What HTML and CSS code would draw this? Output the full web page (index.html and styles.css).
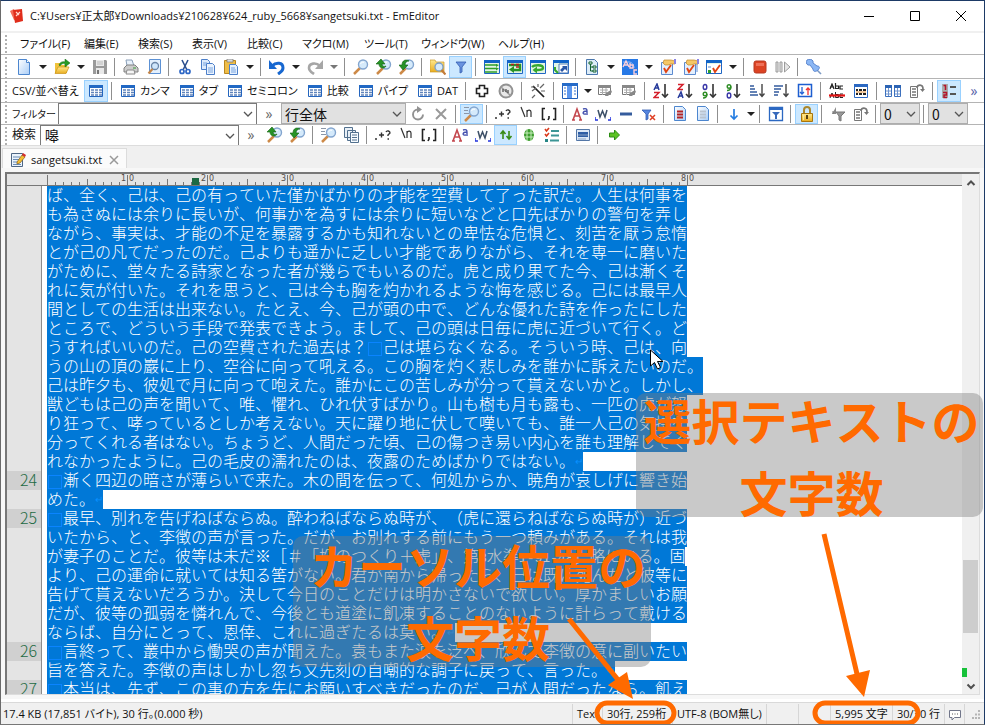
FILE: index.html
```html
<!DOCTYPE html>
<html lang="ja">
<head>
<meta charset="utf-8">
<title>sangetsuki.txt - EmEditor</title>
<link rel="stylesheet" href="styles.css">
</head>
<body>
<svg class="defs" aria-hidden="true">
<defs>
<linearGradient id="gl" x1="0" y1="0" x2="1" y2="1"><stop offset="0" stop-color="#fff"/><stop offset="1" stop-color="#a9cdf7"/></linearGradient>
<linearGradient id="gy" x1="0" y1="0" x2="0" y2="1"><stop offset="0" stop-color="#ffe98e"/><stop offset="1" stop-color="#e9ac1e"/></linearGradient>
<symbol id="new" viewBox="0 0 16 16"><path d="M2.500.500h8l3 3v12h-11z" fill="url(#gl)" stroke="#4c86cf"/><path d="M10.500.500v3h3" fill="#fff" stroke="#4c86cf"/></symbol>
<symbol id="open" viewBox="0 0 16 16"><path d="M1 4h5l1 2h6v8H1z" fill="#f1c33c"/><path d="M1 14.500 4 8h11l-3 6.500z" fill="url(#gy)" stroke="#c99319" stroke-width=".7"/><path d="M5 6c1-3 4-4 6-3V0l5 4-5 4V5C9 4 7 5 6 7z" fill="#259b25" stroke="#126612" stroke-width=".5"/></symbol>
<symbol id="save" viewBox="0 0 16 16"><path d="M1 1h13l1 1v13H1z" fill="#9a9a9a"/><path d="M4 1h8v6H4zM4 9h8v6H4z" fill="#e9e9e9"/><path d="M5 3h6M5 5h6" stroke="#bbb"/><path d="M5 11h2v4H5z" fill="#777"/></symbol>
<symbol id="print" viewBox="0 0 16 16"><path d="m4 7-1-6h6l2 6" fill="#e8f1fb" stroke="#8a9fb8"/><path d="M1 9l3-3h8l3 3v4H1z" fill="#ccc" stroke="#808080"/><path d="M4 11h7l1 4H3z" fill="#f5f5f5" stroke="#8a8a8a"/><path d="M10 9h3" stroke="#3a9b3a"/></symbol>
<symbol id="preview" viewBox="0 0 16 16"><path d="M3.500.500h11v14h-11z" fill="#e4f0fd" stroke="#5c91d4"/><circle cx="9" cy="7" r="3.500" fill="#cfe6fb" stroke="#6b86a8" stroke-width="1.300"/><path d="m6.500 10-4 4.500" stroke="#c48547" stroke-width="2.200"/></symbol>
<symbol id="cut" viewBox="0 0 16 16"><path d="m5 1 5 10M11 1 6 11" stroke="#2b4e8e" stroke-width="1.600"/><g fill="none" stroke="#2f68c6" stroke-width="1.700"><circle cx="5" cy="12.500" r="2"/><circle cx="11" cy="12.500" r="2"/></g></symbol>
<symbol id="copy" viewBox="0 0 16 16"><path d="M1.500.500h6l2 2v8h-8z" fill="#dceafb" stroke="#4c7fc9"/><path d="M6.500 4.500h6l2 2v9h-8z" fill="#eaf3fe" stroke="#4c7fc9"/><path d="M3 4h4M3 6h3M8 9h5M8 11h5M8 13h5" stroke="#79a4df"/></symbol>
<symbol id="paste" viewBox="0 0 16 16"><path d="M1.500 1.500h11v13h-11z" fill="#eebd48" stroke="#b98720"/><path d="M4 0h6v3H4z" fill="#ddd" stroke="#777" stroke-width=".7"/><path d="M6.500 5.500h6l2 2v8h-8z" fill="#e6f1fe" stroke="#4c7fc9"/><path d="M8 9h4M8 11h5M8 13h5" stroke="#79a4df"/></symbol>
<symbol id="undo" viewBox="0 0 16 16"><path d="M3 7c4-4 11-4 11 2 0 3-2 4-5 6" fill="none" stroke="#1767d0" stroke-width="3"/><path d="M0 1v9h8z" fill="#1767d0"/></symbol>
<symbol id="redo" viewBox="0 0 16 16"><path d="M13 7C9 3 2 4 2 9c0 3 2 4 5 6" fill="none" stroke="#a6a6a6" stroke-width="2.600"/><path d="M16 1v9H8z" fill="#a6a6a6"/></symbol>
<symbol id="find" viewBox="0 0 16 16"><path d="m7 9-6 6" stroke="#cd8a48" stroke-width="2.500"/><circle cx="10" cy="5.500" r="4.500" fill="#d5eafb" stroke="#83a5cf" stroke-width="1.400"/><path d="M7.500 5c.5-1.500 2-2.200 3.500-1.700" stroke="#fff" fill="none"/></symbol>
<symbol id="findup" viewBox="0 0 16 16"><use href="#find"/><path d="M0 5 5 0l4 5H6c0 2 2 3 4 2-1 3-7 3-7-2z" fill="#279327" stroke="#12620f" stroke-width=".6"/></symbol>
<symbol id="finddn" viewBox="0 0 16 16"><use href="#find"/><path d="M0 6h3c0-5 4-6 7-4-2 0-4 1-4 4h3l-5 5z" fill="#279327" stroke="#12620f" stroke-width=".6"/></symbol>
<symbol id="findfast" viewBox="0 0 16 16"><use href="#find"/><path d="M0 1.500h5M0 4.500h4M0 7.500h5" stroke="#8b97a8"/></symbol>
<symbol id="findfiles" viewBox="0 0 16 16"><path d="M0 1h5l1 2h8v10H0z" fill="url(#gy)" stroke="#c99a29" stroke-width=".7"/><circle cx="9" cy="8" r="4" fill="#d5eafb" stroke="#7c9fc6" stroke-width="1.300"/><path d="m11.500 11 4 4.500" stroke="#c27b3a" stroke-width="2.200"/></symbol>
<symbol id="filter" viewBox="0 0 16 16"><path d="M3 3h10l-4 5v5l-2 1V8z" fill="#6a93df" stroke="#315bb0" stroke-width=".8"/></symbol>
<symbol id="frame" viewBox="0 0 16 16"><path d="M.500 1.500h15v13H.500z" fill="#e3f5e5" stroke="#1f66c4"/><path d="M0 1h16v3H0z" fill="#1264c8"/></symbol>
<symbol id="wrapno" viewBox="0 0 16 16"><use href="#frame"/><path d="M1 6h12M1 9.500h12M1 13h12" stroke="#2f9e2a" stroke-width="1.500"/><path d="m12 5 3 1-3 2zm0 3.500 3 1-3 2z" fill="#2f9e2a"/></symbol>
<symbol id="wrapchar" viewBox="0 0 16 16"><use href="#frame"/><path d="M2 6h11v5H6" fill="none" stroke="#279327" stroke-width="2.400"/><path d="m7 7v7l-5-3.500z" fill="#279327"/><path d="M4 5.500h3M9 5.500h3M9 8h3" stroke="#b51d1d" stroke-width="1.600"/></symbol>
<symbol id="wrapwin" viewBox="0 0 16 16"><use href="#frame"/><path d="M2 8c2-2 11-3 11 1 0 2-3 2-6 2" fill="none" stroke="#36a82e" stroke-width="2.400"/><path d="m7 7.500v7L2.500 11z" fill="#36a82e"/></symbol>
<symbol id="wrappage" viewBox="0 0 16 16"><use href="#frame"/><path d="M6 5h9v9H6z" fill="#fff" stroke="#547fb9"/><path d="M9 7h5v5l-2-2-3 3-2-2 3-3z" fill="#2b57a6"/><path d="M2 8v3l3 3" fill="none" stroke="#36a82e" stroke-width="2"/></symbol>
<symbol id="tree" viewBox="0 0 16 16"><path d="M2.500.500h8l3 3v12h-11z" fill="#dcecf8" stroke="#4b77ad"/><path d="M5 3h3v2H5zM9 7h3v2H9zM9 11h3v2H9z" fill="#fff" stroke="#126330"/><path d="M6.500 5v7H9M6.500 8H9" stroke="#126330" fill="none"/></symbol>
<symbol id="abc" viewBox="0 0 16 16"><path d="M0 0h16v16H0z" fill="#2779e6"/><path d="M1 3h6c3 0 5 3 5 6" stroke="#8fc0ff" fill="none"/><path d="m1 8 3-6 3 6M2 6h4M8 4v5h3V6H8M15 11h-3v4h3" stroke="#ffd0d8" stroke-width="1.400" fill="none"/></symbol>
<symbol id="check" viewBox="0 0 16 16"><path d="M1.500 3.500h11v12h-11z" fill="#e3effd" stroke="#5c8bd0"/><path d="m4 9 2 4 5-7" fill="none" stroke="#e14312" stroke-width="1.900"/><path d="M4 1h7l4 1v3h-4L8 6H5L3 4z" fill="#f5c766" stroke="#c08627" stroke-width=".7"/><path d="M14 0h2v5h-2z" fill="#8a82e3"/></symbol>
<symbol id="checks" viewBox="0 0 16 16"><path d="M6 4h8v9" fill="none" stroke="#5c8bd0"/><use href="#check"/></symbol>
<symbol id="tasks" viewBox="0 0 16 16"><use href="#frame"/><path d="M1 5h14v9H1z" fill="#fff"/><path d="m7 9 2 4 5-7" fill="none" stroke="#e14312" stroke-width="1.900"/><path d="M2 11h3v3H2z" fill="#2f9e2a"/><path d="M2 7h3v2H2z" fill="#aac3e6"/></symbol>
<symbol id="stop" viewBox="0 0 16 16"><rect x="2" y="2" width="12" height="12" rx="2" fill="#dc4323" stroke="#b63822"/><path d="M4 4h8v3H4z" fill="#ef7058"/></symbol>
<symbol id="step" viewBox="0 0 16 16"><path d="M1 3h2v10H1zM5 3h2v10H5zM9.500 3l5.500 5-5.500 5z" fill="#e5e5e5" stroke="#9b9b9b"/></symbol>
<symbol id="pin" viewBox="0 0 16 16"><path d="m9 9 6 6" stroke="#7d9ac4" stroke-width="1.600"/><path d="M1 1c2-1 5-1 6 1v2l4 3c3 0 3 2 1 4-2 2-5 2-5-1L4 6H2C0 5 0 3 1 1z" fill="#8bb7f5" stroke="#5b86cf"/></symbol>
<symbol id="table" viewBox="0 0 16 16"><path d="M1.500 2.500h13v11h-13z" fill="#fff" stroke="#2465be"/><path d="M1 2h14v3H1z" fill="#2168c4"/><path d="M3 7h3M7 7h3M11 7h3M3 9.500h3M7 9.500h3M11 9.500h3M3 12h3M7 12h3M11 12h3" stroke="#5f83ba" stroke-width="1.300"/></symbol>
<symbol id="plus" viewBox="0 0 16 16"><path d="M5.500 2.500h5v3h3v5h-3v3h-5v-3h-3v-5h3z" fill="#fff" stroke="#222" stroke-width="1.600"/></symbol>
<symbol id="noquote" viewBox="0 0 16 16"><circle cx="8" cy="8" r="6.500" fill="#e9e9e9" stroke="#929292" stroke-width="2"/><path d="m3 4 10 9" stroke="#999" stroke-width="1.500"/><path d="M5 6v3M8 6v3M10 7v3" stroke="#555" stroke-width="1.300"/></symbol>
<symbol id="wand" viewBox="0 0 16 16"><path d="m3 3 11 11" stroke="#222" stroke-width="1.700"/><path d="M10 5l4-4M2 8l4-3M5 12l-3 3M8 1v3M11 8h4M1 4h3" stroke="#666" stroke-width="1.200"/></symbol>
<symbol id="columns" viewBox="0 0 16 16"><path d="M.500.500h15v15H.500z" fill="#fff" stroke="#225fb9"/><path d="M0 0h16v3H0z" fill="#266bc8"/><path d="M5 3h5v12H5z" fill="#5d97ee"/><path d="M2 5h2M2 8h2M2 11h2M12 5h2M12 8h2M12 11h2" stroke="#7ba0db" stroke-width="1.500"/></symbol>
<symbol id="tableg" viewBox="0 0 16 16"><path d="M1.500 2.500h12v9h-12z" fill="#fff" stroke="#777"/><path d="M1 2h13v3H1z" fill="#888"/><path d="M3 7h8M3 9.500h7M5.500 5v7M9 5v6" stroke="#aaa"/><path d="m8 13 1-3 5-3 1 2-4 4z" fill="#888"/></symbol>
<symbol id="arrowdn" viewBox="0 0 16 16"><path d="M12 1v13" stroke="#333" stroke-width="1.600"/><path d="M9 11l3 3 3-3" fill="none" stroke="#333" stroke-width="1.600"/></symbol>
<symbol id="sortaz" viewBox="0 0 16 16"><path d="m1 7 3-6 2 6M2 5h4" fill="none" stroke="#273b9b" stroke-width="1.500"/><path d="M1 9.500h5l-5 5h5" fill="none" stroke="#d4202c" stroke-width="1.500"/><use href="#arrowdn"/></symbol>
<symbol id="sortza" viewBox="0 0 16 16"><path d="M1 1.500h5l-5 5h5" fill="none" stroke="#d4202c" stroke-width="1.500"/><path d="m1 15 3-6 2 6M2 13h4" fill="none" stroke="#273b9b" stroke-width="1.500"/><use href="#arrowdn"/></symbol>
<symbol id="sort09" viewBox="0 0 16 16"><ellipse cx="4" cy="4" rx="1.800" ry="2.500" fill="none" stroke="#3a38a8" stroke-width="1.400"/><circle cx="4" cy="11" r="1.800" fill="none" stroke="#2d8d24" stroke-width="1.400"/><path d="M6 11c0 2-1 4-4 4" fill="none" stroke="#2d8d24" stroke-width="1.400"/><use href="#arrowdn"/></symbol>
<symbol id="sort90" viewBox="0 0 16 16"><circle cx="4" cy="3.500" r="1.800" fill="none" stroke="#2d8d24" stroke-width="1.400"/><path d="M6 3.500c0 2-1 4-4 4" fill="none" stroke="#2d8d24" stroke-width="1.400"/><ellipse cx="4" cy="12.500" rx="1.800" ry="2.500" fill="none" stroke="#3a38a8" stroke-width="1.400"/><use href="#arrowdn"/></symbol>
<symbol id="lenup" viewBox="0 0 16 16"><path d="M1 3h4M1 6h5M1 9h7M1 12h8" stroke="#335b9d" stroke-width="1.600"/><path d="M13 1v12M10.500 10.500l2.500 3 2.500-3" fill="none" stroke="#444" stroke-width="1.400"/></symbol>
<symbol id="lendn" viewBox="0 0 16 16"><path d="M1 3h9M1 6h7M1 9h5M1 12h4" stroke="#335b9d" stroke-width="1.600"/><path d="M13 1v12M10.500 10.500l2.500 3 2.500-3" fill="none" stroke="#444" stroke-width="1.400"/></symbol>
<symbol id="updown" viewBox="0 0 16 16"><path d="M1.500 1.500h13v12h-13z" fill="#fff" stroke="#1d5ed0" stroke-width="1.500"/><path d="M5 4v7M3 9l2 2 2-2" fill="none" stroke="#2464d6" stroke-width="1.300"/><path d="M11 12V5M9 7l2-2 2 2" fill="none" stroke="#e33" stroke-width="1.300"/></symbol>
<symbol id="dup" viewBox="0 0 16 16"><path d="m1 6 2-5 2 5M1 4h4M6.500 0v5.500h3V3h-3M14 3h-3v3h3" fill="none" stroke="#222" stroke-width="1.200"/><path d="m1 15 2-5 2 5M6.500 9v5.500h3v-3h-3M14 11h-3v3.500h3" fill="none" stroke="#222"/><path d="M0 12.500h16" stroke="#e31414" stroke-width="2.200"/></symbol>
<symbol id="unique" viewBox="0 0 16 16"><path d="M1.500 1.500h13v13h-13z" fill="#fff" stroke="#2b68c2"/><path d="M1 1h14v3H1z" fill="#2b68c2"/><path d="M3 7h2M6 7h3M10 7h3M3 11h2M6 11h3M10 11h3" stroke="#222" stroke-width="2"/><path d="M3 9h10" stroke="#e18b31"/></symbol>
<symbol id="tables" viewBox="0 0 16 16"><path d="M.500 2.500h6v11h-6zM9.500 2.500h6v11h-6z" fill="#fff" stroke="#3c70bd"/><path d="M0 2h7v3H0zM9 2h7v3H9z" fill="#2c64b4"/><path d="M1 8h5M1 11h5M3.500 5v8M10 8h5M10 11h5M12.500 5v8" stroke="#6d94d0"/></symbol>
<symbol id="rotate" viewBox="0 0 16 16"><path d="M1.500 3.500h7v11h-7z" fill="#fff" stroke="#777"/><path d="M3 6h4M3 9h4M3 12h4" stroke="#777" stroke-width="1.400"/><path d="M8 5c0-4 6-4 6 1" fill="none" stroke="#777" stroke-width="1.700"/><path d="M11 6h5l-2.500 3z" fill="#777"/></symbol>
<symbol id="numbers" viewBox="0 0 16 16"><path d="M1 1h6v14H1z" fill="#aaa"/><path d="M2.500 2.500h2V7M2 9.500h3.500V12H3v2.500h3" fill="none" stroke="#b3122b" stroke-width="1.500"/><path d="M9 4h6M9 11h6" stroke="#555" stroke-width="1.800"/></symbol>
<symbol id="refresh" viewBox="0 0 16 16"><path d="M8 3.500a5 5 0 1 0 5 5" fill="none" stroke="#929292" stroke-width="1.900"/><path d="M7 0l5 3.500L7 7z" fill="#929292"/></symbol>
<symbol id="cross" viewBox="0 0 16 16"><path d="m3 3 10 10M13 3 3 13" stroke="#999" stroke-width="2"/></symbol>
<symbol id="regex" viewBox="0 0 16 16"><path d="M0 12h2M4 8h5M6.500 5.500v5M11 5c1-2 4-1 4 1l-2 2v1M12.500 12h1.500" fill="none" stroke="#333" stroke-width="1.400"/></symbol>
<symbol id="escape" viewBox="0 0 16 16"><path d="m3 1 4 10M9 11V4M9 6c1-3 4-2 4 0v5" fill="none" stroke="#333" stroke-width="1.200"/></symbol>
<symbol id="bracket" viewBox="0 0 16 16"><path d="M4 2.500H1.500v11H4M12 2.500h2.500v11H12M8 10v2l-1 2" fill="none" stroke="#222" stroke-width="1.600"/></symbol>
<symbol id="case" viewBox="0 0 16 16"><path d="m1 14 4-11 4 11M3 10h5M0 14h3M7 14h3" fill="none" stroke="#c4484f" stroke-width="1.600"/><path d="M11 3c3-1 4 0 4 2v4M15 5c-5 0-5 4-1 3" fill="none" stroke="#4450ad" stroke-width="1.400"/></symbol>
<symbol id="word" viewBox="0 0 16 16"><path d="m3 4 2 7 2.500-6L10 11l2-7" fill="none" stroke="#3c4f66" stroke-width="1.500"/><path d="M0 11v3h3M13 14h3v-3" fill="none" stroke="#23d" stroke-width="1.500"/></symbol>
<symbol id="minus" viewBox="0 0 16 16"><path d="M2 6.500h12v3H2z" fill="#355c9d"/></symbol>
<symbol id="nofilter" viewBox="0 0 16 16"><path d="M1 4h9L7 8v5l-2 1V8z" fill="#5585df" stroke="#315bb0" stroke-width=".8"/><path d="m9 9 5 5m0-5-5 5" stroke="#df3e24" stroke-width="1.500"/></symbol>
<symbol id="docred" viewBox="0 0 16 16"><path d="M2.500.500h8l3 3v11h-11z" fill="url(#gl)" stroke="#4c86cf"/><path d="M5 5.500h6M5 8.500h6M5 11.500h6" stroke="#b42424" stroke-width="2"/></symbol>
<symbol id="docgray" viewBox="0 0 16 16"><path d="M2.500.500h8l3 3v11h-11z" fill="url(#gl)" stroke="#4c86cf"/><path d="M5 5.500h6M5 8.500h6M5 11.500h6" stroke="#b9c3cf" stroke-width="2"/></symbol>
<symbol id="down" viewBox="0 0 16 16"><path d="M8 3v10M4.500 9.500 8 13l3.500-3.500" fill="none" stroke="#257de1" stroke-width="1.700"/></symbol>
<symbol id="filterwin" viewBox="0 0 16 16"><path d="M1.500 1.500h13v13h-13z" fill="#fff" stroke="#2b68c2" stroke-width="1.300"/><path d="M1 1h14v3H1z" fill="#2b68c2"/><path d="M4 6h8l-3 3v4H7V9z" fill="#386abc"/></symbol>
<symbol id="lock" viewBox="0 0 16 16"><path d="M5 8V4c0-4 6-4 6 0v4" fill="none" stroke="#a9872d" stroke-width="2"/><path d="M2.500 7.500h11v8h-11z" fill="url(#gy)" stroke="#a8750d"/><path d="M4 9h1v5H4z" fill="#ffe99a"/><path d="M7 9h2v4H7z" fill="#573f10"/></symbol>
<symbol id="filterup" viewBox="0 0 16 16"><path d="m2 8 4-7v7z" fill="#888"/><path d="M6 6h9l-4 4v5l-2-1v-4zM3 8V5" fill="#999" stroke="#777"/></symbol>
<symbol id="copies" viewBox="0 0 16 16"><path d="M.500.500h8v10h-8zM3.500 3.500h8v10h-8z" fill="#e9f0f7" stroke="#52708e"/><path d="M6.500 5.500h8v10h-8z" fill="#f6fbff" stroke="#52708e"/><path d="M8 8h5M8 10.500h5M8 13h5" stroke="#52708e"/></symbol>
<symbol id="wraparound" viewBox="0 0 16 16"><path d="M5 12V4M2.500 7 5 4l2.500 3M11 4v8M8.500 9l2.500 3 2.500-3" fill="none" stroke="#398b16" stroke-width="1.600"/></symbol>
<symbol id="globe" viewBox="0 0 16 16"><ellipse cx="8" cy="8" rx="5" ry="6" fill="#3c9d2d"/><path d="M3 6h10M3 10h10M6 2v12M10 2v12" stroke="#c7edbd"/></symbol>
<symbol id="options" viewBox="0 0 16 16"><path d="m1 2 1.500 2L5 1M1 7l1.500 2L5 6" fill="none" stroke="#d93a1b" stroke-width="1.600"/><path d="M1 12h3v3H1z" fill="#268686"/><path d="M7 4h8M7 8.500h8M6 13.500h9" stroke="#3c9696" stroke-width="1.900"/></symbol>
<symbol id="bar" viewBox="0 0 16 16"><path d="M1.500 2.500h13v11h-13z" fill="#dce8f6" stroke="#5376a6"/><path d="M3 5h10v5H3z" fill="#2d5da5"/><path d="M3 8h10M3 12h8" stroke="#8ba4c5"/></symbol>
<symbol id="go" viewBox="0 0 16 16"><path d="M3.500 6h5V3l5 5-5 5v-3h-5z" fill="#5cc323" stroke="#2c8d14"/></symbol>
<symbol id="chev" viewBox="0 0 16 16"><path d="m4 6 4 4 4-4" fill="none" stroke="#555" stroke-width="1.300"/></symbol>
</defs>
</svg>

<main class="window">
  <header class="titlebar">
    <svg class="logo" viewBox="0 0 16 16" aria-hidden="true"><path d="m1 3 4-2 3 12-3-1z" fill="#f26a56"/><path d="m4 2 9-1 1 12-8 2z" fill="#e02d1b"/><path d="m7 4 3 3M7 8l4-4" stroke="#ffd9d0" stroke-width="1.200"/></svg>
    <h1>C:¥Users¥正太郎¥Downloads¥210628¥624_ruby_5668¥sangetsuki.txt - EmEditor</h1>
    <button class="win" aria-label="最小化"><svg viewBox="0 0 12 12"><path d="M1 6.500h10" stroke="#000"/></svg></button>
    <button class="win" aria-label="最大化"><svg viewBox="0 0 12 12"><path d="M1.500 1.500h9v9h-9z" fill="none" stroke="#000"/></svg></button>
    <button class="win" aria-label="閉じる"><svg viewBox="0 0 12 12"><path d="m1 1 10 10M11 1 1 11" stroke="#000"/></svg></button>
  </header>

  <nav class="bar menu">
    <button>ファイル(F)</button><button>編集(E)</button><button>検索(S)</button><button>表示(V)</button><button>比較(C)</button><button>マクロ(M)</button><button>ツール(T)</button><button>ウィンドウ(W)</button><button>ヘルプ(H)</button>
  </nav>

  <div class="bar main-tools">
    <button class="tb" aria-label="新規"><svg><use href="#new"/></svg></button><button class="dd" aria-label="新規の一覧"></button>
    <button class="tb" aria-label="開く"><svg><use href="#open"/></svg></button><button class="dd" aria-label="最近のファイル"></button>
    <button class="tb" aria-label="保存"><svg><use href="#save"/></svg></button><i class="sep"></i>
    <button class="tb" aria-label="印刷"><svg><use href="#print"/></svg></button>
    <button class="tb" aria-label="印刷プレビュー"><svg><use href="#preview"/></svg></button><i class="sep"></i>
    <button class="tb" aria-label="切り取り"><svg><use href="#cut"/></svg></button>
    <button class="tb" aria-label="コピー"><svg><use href="#copy"/></svg></button>
    <button class="tb" aria-label="貼り付け"><svg><use href="#paste"/></svg></button><button class="dd" aria-label="履歴"></button><i class="sep"></i>
    <button class="tb" aria-label="元に戻す"><svg><use href="#undo"/></svg></button><button class="dd" aria-label="元に戻す一覧"></button>
    <button class="tb" aria-label="やり直し"><svg><use href="#redo"/></svg></button><button class="dd off" aria-label="やり直し一覧"></button><i class="sep"></i>
    <button class="tb" aria-label="検索"><svg><use href="#find"/></svg></button>
    <button class="tb" aria-label="前を検索"><svg><use href="#findup"/></svg></button>
    <button class="tb" aria-label="次を検索"><svg><use href="#finddn"/></svg></button><i class="sep"></i>
    <button class="tb" aria-label="ファイルから検索"><svg><use href="#findfiles"/></svg></button>
    <button class="tb on" aria-label="フィルター バー"><svg><use href="#filter"/></svg></button><i class="sep"></i>
    <button class="tb" aria-label="折り返さない"><svg><use href="#wrapno"/></svg></button>
    <button class="tb on" aria-label="指定文字数で折り返す"><svg><use href="#wrapchar"/></svg></button>
    <button class="tb" aria-label="ウィンドウの右端で折り返す"><svg><use href="#wrapwin"/></svg></button>
    <button class="tb" aria-label="ページに合わせて折り返す"><svg><use href="#wrappage"/></svg></button><i class="sep"></i>
    <button class="tb" aria-label="アウトライン"><svg><use href="#tree"/></svg></button><button class="dd" aria-label="プラグイン"></button>
    <button class="tb" aria-label="変換"><svg><use href="#abc"/></svg></button><button class="dd" aria-label="変換一覧"></button>
    <button class="tb" aria-label="現在の設定"><svg><use href="#check"/></svg></button>
    <button class="tb" aria-label="すべての設定"><svg><use href="#checks"/></svg></button>
    <button class="tb" aria-label="カスタマイズ"><svg><use href="#tasks"/></svg></button><button class="dd" aria-label="カスタマイズ一覧"></button><i class="sep"></i>
    <button class="tb" aria-label="記録"><svg><use href="#stop"/></svg></button>
    <button class="tb" aria-label="実行"><svg><use href="#step"/></svg></button><i class="sep"></i>
    <button class="tb" aria-label="常に手前"><svg><use href="#pin"/></svg></button>
  </div>

  <div class="bar csv-tools">
    <span class="lead wide">CSV/並べ替え</span>
    <button class="tb on" aria-label="標準モード"><svg><use href="#table"/></svg></button><i class="sep"></i>
    <div class="formats">
      <button><svg><use href="#table"/></svg>カンマ</button>
      <button><svg><use href="#table"/></svg>タブ</button>
      <button><svg><use href="#table"/></svg>セミコロン</button>
      <button><svg><use href="#table"/></svg>比較</button>
      <button><svg><use href="#table"/></svg>パイプ</button>
      <button><svg><use href="#table"/></svg>DAT</button>
    </div><i class="sep"></i>
    <button class="tb" aria-label="追加"><svg><use href="#plus"/></svg></button>
    <button class="tb" aria-label="引用符なし"><svg><use href="#noquote"/></svg></button><i class="sep"></i>
    <button class="tb" aria-label="区切り変換"><svg><use href="#wand"/></svg></button><i class="sep"></i>
    <button class="tb" aria-label="列の選択"><svg><use href="#columns"/></svg></button><button class="dd slim" aria-label="列の一覧"></button>
    <button class="tb" aria-label="列の編集"><svg><use href="#tableg"/></svg></button>
    <button class="tb" aria-label="列の抽出"><svg><use href="#tableg"/></svg></button><i class="sep"></i>
    <button class="tb" aria-label="昇順"><svg><use href="#sortaz"/></svg></button>
    <button class="tb" aria-label="降順"><svg><use href="#sortza"/></svg></button>
    <button class="tb" aria-label="数値昇順"><svg><use href="#sort09"/></svg></button>
    <button class="tb" aria-label="数値降順"><svg><use href="#sort90"/></svg></button>
    <button class="tb" aria-label="短い順"><svg><use href="#lenup"/></svg></button>
    <button class="tb" aria-label="長い順"><svg><use href="#lendn"/></svg></button>
    <button class="tb" aria-label="並べ替え"><svg><use href="#updown"/></svg></button><i class="sep"></i>
    <button class="tb" aria-label="重複行の削除"><svg><use href="#dup"/></svg></button>
    <button class="tb" aria-label="重複行"><svg><use href="#unique"/></svg></button><i class="sep"></i>
    <button class="tb" aria-label="結合"><svg><use href="#tables"/></svg></button>
    <button class="tb" aria-label="転置"><svg><use href="#rotate"/></svg></button><i class="sep"></i>
    <button class="tb on" aria-label="行番号"><svg><use href="#numbers"/></svg></button>
    <button class="more">»</button>
  </div>

  <div class="bar filter-tools">
    <label class="lead filter-label" for="filter-text">フィルター</label>
    <div class="combo"><input id="filter-text" type="text"><button aria-label="フィルター履歴"><svg><use href="#chev"/></svg></button></div>
    <button class="more">»</button>
    <div class="pick scope"><select aria-label="対象"><option>行全体</option></select><svg><use href="#chev"/></svg></div>
    <button class="tb" aria-label="更新"><svg><use href="#refresh"/></svg></button>
    <button class="tb" aria-label="中止"><svg><use href="#cross"/></svg></button><i class="sep"></i>
    <button class="tb on" aria-label="インクリメンタル検索"><svg><use href="#findfast"/></svg></button><i class="sep"></i>
    <button class="tb" aria-label="正規表現"><svg><use href="#regex"/></svg></button>
    <button class="tb" aria-label="エスケープ シーケンス"><svg><use href="#escape"/></svg></button>
    <button class="tb" aria-label="数値範囲"><svg><use href="#bracket"/></svg></button><i class="sep"></i>
    <button class="tb" aria-label="大文字小文字"><svg><use href="#case"/></svg></button>
    <button class="tb" aria-label="単語"><svg><use href="#word"/></svg></button>
    <button class="tb" aria-label="除外"><svg><use href="#minus"/></svg></button>
    <button class="tb" aria-label="フィルター解除"><svg><use href="#nofilter"/></svg></button><i class="sep"></i>
    <button class="tb" aria-label="ブックマーク行"><svg><use href="#docred"/></svg></button>
    <button class="tb" aria-label="非ブックマーク行"><svg><use href="#docgray"/></svg></button><i class="sep"></i>
    <button class="tb" aria-label="次へ"><svg><use href="#down"/></svg></button><button class="dd slim" aria-label="表示行数"></button><i class="sep"></i>
    <button class="tb" aria-label="高度なフィルター"><svg><use href="#filterwin"/></svg></button><i class="sep"></i>
    <button class="tb on" aria-label="ロック"><svg><use href="#lock"/></svg></button><i class="sep"></i>
    <button class="tb" aria-label="フィルターを戻す"><svg><use href="#filterup"/></svg></button>
    <button class="tb" aria-label="抽出"><svg><use href="#rotate"/></svg></button><i class="sep"></i>
    <div class="pick count"><select aria-label="前の行数"><option>0</option></select><svg><use href="#chev"/></svg></div><i class="sep"></i>
    <div class="pick count"><select aria-label="後の行数"><option>0</option></select><svg><use href="#chev"/></svg></div>
  </div>

  <div class="bar find-tools">
    <label class="lead find-label" for="find-text">検索</label>
    <div class="combo"><input id="find-text" type="text" value="嗥"><button aria-label="検索履歴"><svg><use href="#chev"/></svg></button></div>
    <button class="more">»</button>
    <button class="tb" aria-label="前を検索"><svg><use href="#findup"/></svg></button>
    <button class="tb" aria-label="次を検索"><svg><use href="#finddn"/></svg></button><i class="sep"></i>
    <button class="tb" aria-label="インクリメンタル検索"><svg><use href="#findfast"/></svg></button>
    <button class="tb" aria-label="文書グループ"><svg><use href="#copies"/></svg></button><i class="sep"></i>
    <button class="tb" aria-label="正規表現"><svg><use href="#regex"/></svg></button>
    <button class="tb" aria-label="エスケープ シーケンス"><svg><use href="#escape"/></svg></button>
    <button class="tb" aria-label="数値範囲"><svg><use href="#bracket"/></svg></button><i class="sep"></i>
    <button class="tb" aria-label="大文字小文字"><svg><use href="#case"/></svg></button>
    <button class="tb" aria-label="単語"><svg><use href="#word"/></svg></button>
    <button class="tb on" aria-label="文末まで検索したら文頭に移動"><svg><use href="#wraparound"/></svg></button>
    <button class="tb" aria-label="すべて"><svg><use href="#globe"/></svg></button>
    <button class="tb" aria-label="オプション"><svg><use href="#options"/></svg></button><i class="sep"></i>
    <button class="tb" aria-label="検索バー"><svg><use href="#bar"/></svg></button><i class="sep"></i>
    <button class="tb" aria-label="移動"><svg><use href="#go"/></svg></button>
  </div>

  <div class="tabs">
    <div class="tab">
      <svg class="tab-icon" viewBox="0 0 16 16" aria-hidden="true"><path d="M1.500 1.500h11v13h-11z" fill="#eaf3fc" stroke="#4e6785"/><path d="M3 5h7M3 7.500h6M3 10h5M3 12.500h8" stroke="#698bb5"/><path d="m7 10 5-7 3 2-5 6-3 1z" fill="#f5bd30" stroke="#82601f" stroke-width=".7"/><path d="m12 3 1-2 3 2-1 2z" fill="#d62b2b"/></svg>
      <span>sangetsuki.txt</span>
      <button aria-label="タブを閉じる"><svg viewBox="0 0 10 10"><path d="m1 1 8 8M9 1 1 9" stroke="#999" stroke-width="1.500"/></svg></button>
    </div>
  </div>

  <section class="editor">
    <div class="page">
      <div class="ruler">
        <svg class="ticks" aria-hidden="true"><defs><pattern id="tick" width="80" height="10" patternUnits="userSpaceOnUse"><path d="M.500 0v10M8.500 7v3M16.500 7v3M24.500 7v3M32.500 7v3M40.500 4v6M48.500 7v3M56.500 7v3M64.500 7v3M72.500 7v3" stroke="#777"/></pattern></defs><rect width="641" height="10" fill="url(#tick)"/><rect x="145" y="3" width="7" height="7" fill="#1c6a43"/></svg>
        <span>1<b>0</b></span><span>2<b>0</b></span><span>3<b>0</b></span><span>4<b>0</b></span><span>5<b>0</b></span><span>6<b>0</b></span><span>7<b>0</b></span><span>8<b>0</b></span>
      </div>
      <div class="text">
        <div class="row"><span></span><p>ば、全く、己は、己の有っていた僅かばかりの才能を空費して了った訳だ。人生は何事を</p></div>
        <div class="row"><span></span><p>も為さぬには余りに長いが、何事かを為すには余りに短いなどと口先ばかりの警句を弄し</p></div>
        <div class="row"><span></span><p>ながら、事実は、才能の不足を暴露するかも知れないとの卑怯な危惧と、刻苦を厭う怠惰</p></div>
        <div class="row"><span></span><p>とが己の凡てだったのだ。己よりも遥かに乏しい才能でありながら、それを専一に磨いた</p></div>
        <div class="row"><span></span><p>がために、堂々たる詩家となった者が幾らでもいるのだ。虎と成り果てた今、己は漸くそ</p></div>
        <div class="row"><span></span><p>れに気が付いた。それを思うと、己は今も胸を灼かれるような悔を感じる。己には最早人</p></div>
        <div class="row"><span></span><p>間としての生活は出来ない。たとえ、今、己が頭の中で、どんな優れた詩を作ったにした</p></div>
        <div class="row"><span></span><p>ところで、どういう手段で発表できよう。まして、己の頭は日毎に虎に近づいて行く。ど</p></div>
        <div class="row"><span></span><p>うすればいいのだ。己の空費された過去は？<i class="space"></i>己は堪らなくなる。そういう時、己は、向</p></div>
        <div class="row"><span></span><p>うの山の頂の巖に上り、空谷に向って吼える。この胸を灼く悲しみを誰かに訴えたいのだ。</p></div>
        <div class="row"><span></span><p>己は昨夕も、彼処で月に向って咆えた。誰かにこの苦しみが分って貰えないかと。しかし、</p></div>
        <div class="row"><span></span><p>獣どもは己の声を聞いて、唯、懼れ、ひれ伏すばかり。山も樹も月も露も、一匹の虎が怒</p></div>
        <div class="row"><span></span><p>り狂って、哮っているとしか考えない。天に躍り地に伏して嘆いても、誰一人己の気持を</p></div>
        <div class="row"><span></span><p>分ってくれる者はない。ちょうど、人間だった頃、己の傷つき易い内心を誰も理解してく</p></div>
        <div class="row"><span></span><p>れなかったように。己の毛皮の濡れたのは、夜露のためばかりではない。<i class="cr">↵</i></p></div>
        <div class="row num"><span>24</span><p><i class="space"></i>漸く四辺の暗さが薄らいで来た。木の間を伝って、何処からか、暁角が哀しげに響き始</p></div>
        <div class="row"><span></span><p>めた。<i class="cr">↵</i></p></div>
        <div class="row num"><span>25</span><p><i class="space"></i>最早、別れを告げねばならぬ。酔わねばならぬ時が、（虎に還らねばならぬ時が）近づ</p></div>
        <div class="row"><span></span><p>いたから、と、李徴の声が言った。だが、お別れする前にもう一つ頼みがある。それは我</p></div>
        <div class="row"><span></span><p>が妻子のことだ。彼等は未だ※［＃「埒のつくり＋虎」、第<span class="half">3</span>水準<span class="half">1-91-48</span>］略にいる。固</p></div>
        <div class="row"><span></span><p>より、己の運命に就いては知る筈がない。君が南から帰ったら、己は既に死んだと彼等に</p></div>
        <div class="row"><span></span><p>告げて貰えないだろうか。決して今日のことだけは明かさないで欲しい。厚かましいお願</p></div>
        <div class="row"><span></span><p>だが、彼等の孤弱を憐れんで、今後とも道塗に飢凍することのないように計らって戴ける</p></div>
        <div class="row"><span></span><p>ならば、自分にとって、恩倖、これに過ぎたるは莫い。<i class="cr">↵</i></p></div>
        <div class="row num"><span>26</span><p><i class="space"></i>言終って、叢中から慟哭の声が聞えた。袁もまた涙を泛べ、欣んで李徴の意に副いたい</p></div>
        <div class="row"><span></span><p>旨を答えた。李徴の声はしかし忽ち又先刻の自嘲的な調子に戻って、言った。<i class="cr">↵</i></p></div>
        <div class="row num"><span>27</span><p><i class="space"></i>本当は、先ず、この事の方を先にお願いすべきだったのだ、己が人間だったなら。飢え</p></div>
      </div>
    </div>
    <div class="scroll">
      <button aria-label="上へ"><svg viewBox="0 0 16 16"><path d="m4.500 10 3.500-3.500 3.500 3.500" fill="none" stroke="#505050" stroke-width="2"/></svg></button>
      <div class="track"><i class="thumb"></i><i class="mark"></i></div>
      <button aria-label="下へ"><svg viewBox="0 0 16 16"><path d="M4.500 6.500 8 10l3.500-3.500" fill="none" stroke="#505050" stroke-width="2"/></svg></button>
    </div>
  </section>

  <footer class="status">
    <span>17.4 KB (17,851 バイト), 30 行。(0.000 秒)</span>
    <span>Text</span>
    <span>30行, 259桁</span>
    <span>UTF-8 (BOM無し)</span>
    <span></span><span></span>
    <span>5,995 文字</span>
    <span>30/30 行</span>
    <span><svg class="bubble" viewBox="0 0 12 12" aria-hidden="true"><path d="M.500 1.500h11v7h-6L3 11V8.500H.500z" fill="#fff" stroke="#71768a"/><path d="M3 5h1M5.500 5h1M8 5h1" stroke="#555"/></svg></span>
    <span><svg class="grip" viewBox="0 0 12 12" aria-hidden="true"><path d="M9 2h2M6 5.500h2M9 5.500h2M3 9h2M6 9h2M9 9h2" stroke="#b5b5b5" stroke-width="2"/></svg></span>
  </footer>

  <div class="callout selected-count">選択テキストの<br>文字数</div>
  <div class="callout cursor-count">カーソル位置の<br>文字数</div>
  <svg class="marks" aria-hidden="true">
    <g fill="none" stroke="#ff6a00" stroke-width="5"><path d="m569 619 50 62M824 534l33 140"/><rect x="597" y="703" width="77" height="20" rx="10"/><rect x="815" y="703" width="103" height="20" rx="10"/></g>
    <path d="m633 699-25-14 19-13zM864 697l-18-21 24-6z" fill="#ff6a00"/>
    <path d="M650.500 350v16l4-3.500 3 6.500 3-1.500-3-6h5.500z" fill="#fff" stroke="#000"/>
  </svg>
</main>
</body>
</html>
```
FILE: styles.css
```css
* { box-sizing: border-box; }

body {
  margin: 0;
  font: 11px/16px "Open Sans", "Noto Sans CJK JP", sans-serif;
  font-feature-settings: "palt";
  color: #111;
}

button, input, select {
  font: inherit;
  font-feature-settings: inherit;
  color: inherit;
  margin: 0;
  padding: 0;
  border: 0;
  background: none;
}

button { display: flex; align-items: center; justify-content: center; flex: none; }

.defs { position: absolute; width: 0; height: 0; }

.window {
  position: relative;
  display: flex;
  flex-direction: column;
  height: 100vh;
  overflow: hidden;
  background: #fff;
  border: 1px solid #1d3a66;
  border-left-color: #6a6a6a;
  border-bottom-color: #777;
}

.titlebar {
  display: flex;
  flex: none;
  align-items: center;
  height: 32px;
  padding-left: 8px;
  border-bottom: 2px solid #f0f0f0;
}
.logo { width: 16px; height: 16px; margin-right: 5px; }
.titlebar h1 { flex: 1; margin: 0; font-size: 11px; line-height: 16px; font-weight: 400; white-space: nowrap; }
.win { width: 46px; height: 30px; }
.win svg { width: 12px; height: 12px; }

.bar {
  display: flex;
  flex: none;
  align-items: center;
  height: 24px;
  padding-left: 11px;
  border-bottom: 1px solid #b4b4b4;
  background: radial-gradient(circle, #b0b0b0 1px, transparent 1px) 3px 1px / 4px 4px repeat-y #fff;
}
.bar.menu {
  display: grid;
  grid-template-columns: 64px 54px 54px 55px 55px 62px 57px 77px 60px;
  height: 22px;
  padding-left: 19px;
}
.menu button { justify-content: flex-start; white-space: nowrap; }
.bar.filter-tools { height: 22px; }
.bar.find-tools { height: 21px; border-bottom-color: #ddd; }

.tb { width: 23px; height: 22px; }
.tb svg { width: 16px; height: 16px; }
.tb.on { background: #cce8ff; border: 1px solid #99d1ff; }
.filter-tools .tb, .find-tools .tb { height: 20px; }
.csv-tools .tb { width: 24px; }

.sep { flex: none; width: 8px; height: 18px; background: linear-gradient(#8f8f8f, #8f8f8f) 3px 0 / 1px 100% no-repeat; }

.dd { width: 15px; height: 20px; }
.dd::before { content: ""; border: 4px solid transparent; border-top: 4px solid #222; border-bottom: 0; }
.dd.off::before { border-top-color: #777; }
.dd.slim { width: 11px; }

.lead { flex: none; white-space: nowrap; }
.lead.wide { width: 72px; }
.filter-label { width: 46px; font-size: 10px; }
.find-label { width: 28px; font-size: 12px; }

.formats { display: flex; flex: 0 0 346px; justify-content: space-between; padding: 0 4px; }
.formats button { gap: 4px; }
.formats svg { width: 16px; height: 16px; }

.more { width: 24px; font-size: 14px; color: #666; }
.csv-tools .more { margin-left: auto; width: 20px; color: #5560a8; }

.combo { display: flex; flex: 0 0 199px; height: 100%; border: 1px solid #7a7a7a; border-bottom: 0; background: #fff; }
.combo input { flex: 1; min-width: 0; padding-left: 4px; font-size: 14px; line-height: 18px; outline: 0; }
.combo button, .pick svg { width: 16px; }
.combo svg { width: 16px; height: 16px; }

.pick { display: flex; flex: none; align-items: center; height: 100%; border: 1px solid #adadad; background: #e1e1e1; }
.pick select { flex: 1; min-width: 0; appearance: none; padding-left: 3px; font: 14px/18px "Noto Sans CJK JP", sans-serif; }
.pick svg { height: 16px; }
.scope { width: 125px; }
.count { width: 40px; }

.tabs { flex: none; height: 26px; padding: 2px 0 0 1px; background: #f0f0f0; }
.tab {
  display: flex;
  align-items: center;
  width: 125px;
  height: 24px;
  padding: 0 7px 2px;
  background: #fbfbfb;
  border: 1px solid #dcdcdc;
  border-bottom: 0;
}
.tab-icon { width: 16px; height: 16px; margin-right: 5px; }
.tab span { flex: 1; }
.tab button svg { width: 10px; height: 10px; }

.editor {
  display: flex;
  flex: 1;
  min-height: 0;
  margin: 0 4px 7px;
  border: 1px solid #ddd;
  border-top: 2px solid #777;
  border-left: 2px solid #777;
  box-shadow: 0 0 0 4px #f7f7f7;
}
.page { flex: 1; min-width: 0; display: flex; flex-direction: column; overflow: hidden; }
.ruler {
  position: relative;
  display: flex;
  flex: none;
  height: 12px;
  padding-left: 95px;
  background: #e4e4e4;
  border-bottom: 1px solid #777;
  font: 8px/10px "DejaVu Sans", sans-serif;
  color: #554e49;
}
.ruler span { position: relative; width: 80px; padding-left: 19px; }
.ruler b { font-weight: 400; margin-left: 3px; }
.ticks { position: absolute; left: 40px; bottom: 0; width: 641px; height: 10px; }

.text {
  flex: 1;
  min-height: 0;
  overflow: hidden;
  background: linear-gradient(90deg, #e4e4e4 34px, #8c8c8c 34px 35px, #fff 35px);
}
.row {
  display: grid;
  grid-template-columns: 40px max-content;
  height: 19px;
  font: 300 16px/17px "Noto Sans CJK JP", sans-serif;
  font-feature-settings: normal;
  font-kerning: none;
  text-spacing-trim: space-all;
  white-space: pre;
}
.row > span { width: 34px; height: 19px; padding-right: 4px; text-align: right; color: #1c6a43; }
.num > span { background: #d0d0d0; }
.row p { margin: 0; height: 19px; color: #fff; background: #0078d7; }
.half { font: 13px/16px "Liberation Mono", monospace; }
.space { display: inline-block; width: 14px; height: 14px; margin: 0 1px; vertical-align: -3px; border: 1px solid #0a84ff; }
.cr { display: inline-block; width: 8px; overflow: hidden; height: 17px; vertical-align: top; font-size: 10px; font-style: normal; color: #0a90ff; }

.scroll { display: flex; flex: none; flex-direction: column; width: 17px; background: #f0f0f0; }
.scroll button { width: 17px; height: 17px; }
.scroll button svg { width: 16px; height: 16px; }
.track { flex: 1; position: relative; }
.thumb { position: absolute; left: 1px; right: 1px; top: 76%; height: 15%; background: #cdcdcd; }
.mark { position: absolute; left: 0; bottom: 0; width: 5px; height: 9px; background: #17c13a; }

.status {
  display: grid;
  flex: none;
  grid-template-columns: 1fr 30px 70px 94px 32px 32px 62px 52px 20px 20px;
  align-items: center;
  height: 22px;
  background: #f0f0f0;
  border-top: 1px solid #d9d9d9;
}
.status span { height: 20px; padding-left: 4px; line-height: 20px; border-left: 1px solid #d6d6d6; overflow: hidden; white-space: nowrap; }
.status span:first-child { padding-left: 2px; border: 0; }
.status svg { width: 12px; height: 12px; vertical-align: middle; }

.callout {
  position: absolute;
  display: flex;
  flex-direction: column;
  align-items: center;
  justify-content: center;
  border-radius: 10px;
  background: rgba(124, 124, 124, .41);
  color: #ff6a00;
  font: 700 48px/72px "Noto Sans CJK JP", sans-serif;
  font-feature-settings: normal;
  font-kerning: none;
  text-align: center;
  white-space: nowrap;
}
.selected-count { left: 635px; top: 392px; width: 347px; height: 124px; padding-left: 4px; }
.cursor-count { left: 292px; top: 535px; width: 358px; height: 131px; padding: 0 0 4px 12px; }
.marks { position: absolute; left: -1px; top: -1px; width: 985px; height: 725px; pointer-events: none; }
```
